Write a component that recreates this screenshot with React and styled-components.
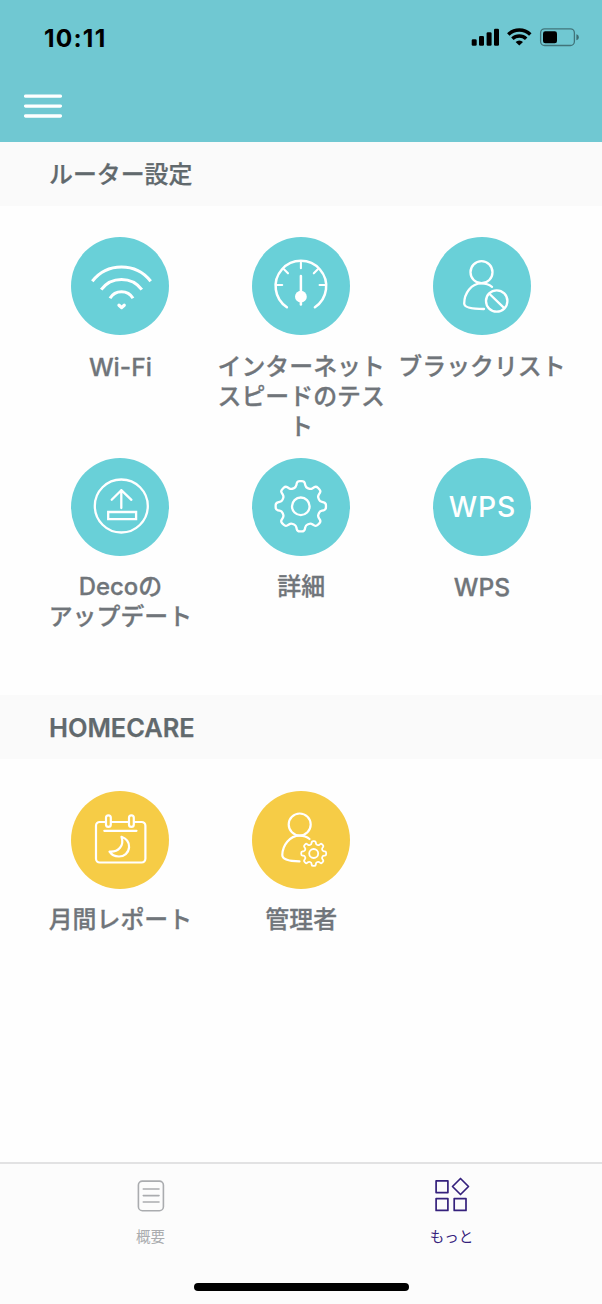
import React from 'react';
import styled, { createGlobalStyle } from 'styled-components';

const GlobalStyle = createGlobalStyle`
  * { box-sizing: border-box; }
  body {
    margin: 0;
    background: #fff;
    font-family: Inter, "Noto Sans CJK JP", sans-serif;
  }
  svg { display: block; }
`;

const Screen = styled.div`
  width: 602px;
  height: 1304px;
  display: flex;
  flex-direction: column;
  background: #fefefe;
  overflow: hidden;
`;

const Header = styled.header`
  flex: none;
  height: 141.5px;
  background: #70c8d2;
`;

const StatusBar = styled.div`
  height: 74px;
  padding: 0 23px 0 44px;
  display: flex;
  align-items: center;
  justify-content: space-between;
`;

const Clock = styled.span`
  padding-top: 2px;
  font-size: 24.5px;
  line-height: 30px;
  font-weight: 700;
  letter-spacing: 1.2px;
  color: #000;
`;

const StatusIcons = styled.div`
  display: flex;
  align-items: center;
`;

const NavBar = styled.div`
  height: 64px;
  padding-left: 24px;
  display: flex;
  align-items: center;
`;

const MenuButton = styled.button`
  border: 0;
  padding: 0;
  background: none;
`;

const SectionTitle = styled.h2`
  flex: none;
  margin: 0;
  height: 64px;
  padding: ${(p) => (p.$latin ? '1px' : '2px')} 49px 0;
  display: flex;
  align-items: center;
  background: #fafafa;
  color: #61696d;
  font-size: ${(p) => (p.$latin ? '25.4px' : '23.9px')};
  line-height: 30px;
  font-weight: ${(p) => (p.$latin ? 600 : 500)};
  -webkit-text-stroke: 0.25px currentColor;
`;

const Grid = styled.div`
  flex: none;
  height: ${(p) => p.$height}px;
  padding: 31.5px 30px 0;
  display: grid;
  grid-template-columns: repeat(3, 180.8px);
  grid-auto-rows: 220.5px;
`;

const Tile = styled.div`
  display: flex;
  flex-direction: column;
  align-items: center;
`;

const Badge = styled.div`
  width: 98px;
  height: 98px;
  border-radius: 50%;
  background: ${(p) => (p.$tone === 'yellow' ? '#f6cc46' : '#69d0d8')};
  display: flex;
  align-items: center;
  justify-content: center;
`;

const BadgeText = styled.span`
  padding-left: 1px;
  color: #fff;
  font-size: 28.3px;
  font-weight: 450;
  letter-spacing: 0.9px;
`;

const Label = styled.div`
  margin-top: 16.5px;
  width: 172px;
  text-align: center;
  white-space: pre-line;
  color: #70757a;
  font-size: ${(p) => (p.$latin ? '24.6px' : '23.9px')};
  line-height: 30px;
  font-weight: 500;
  -webkit-text-stroke: 0.3px currentColor;
`;

const TabBar = styled.nav`
  flex: none;
  margin-top: auto;
  height: 142px;
  border-top: 2px solid #e2e2e3;
  background: #fcfcfc;
  display: flex;
  flex-direction: column;
  align-items: center;
`;

const Tabs = styled.div`
  width: 100%;
  height: 119px;
  display: grid;
  grid-template-columns: 1fr 1fr;
`;

const Tab = styled.div`
  padding-top: 11px;
  display: flex;
  flex-direction: column;
  align-items: center;
  gap: 11px;
  color: ${(p) => (p.$active ? '#35217c' : '#aaacaf')};
  font-size: 14.5px;
  line-height: 22px;
`;

const HomeIndicator = styled.div`
  width: 215px;
  height: 8px;
  border-radius: 4px;
  background: #000;
`;

function gearPath(cx, cy, outer, inner, tip, base) {
  const pts = [];
  for (let i = 0; i < 8; i++) {
    const a = i * 45;
    [[-base, inner], [-tip, outer], [tip, outer], [base, inner]].forEach(([d, r]) => {
      const t = ((a + d - 90) * Math.PI) / 180;
      pts.push([cx + r * Math.cos(t), cy + r * Math.sin(t)]);
    });
  }
  const k = 0.36;
  const n = pts.length;
  const mix = (p, q) => [p[0] + (q[0] - p[0]) * k, p[1] + (q[1] - p[1]) * k];
  const f = (p) => p.map((v) => v.toFixed(2)).join(' ');
  return (
    pts
      .map((p, i) => {
        const before = mix(p, pts[(i + n - 1) % n]);
        const after = mix(p, pts[(i + 1) % n]);
        return `${i ? 'L' : 'M'}${f(before)} Q${f(p)} ${f(after)}`;
      })
      .join(' ') + 'Z'
  );
}

const Glyph = ({ children, weight = 2.5 }) => (
  <svg width="98" height="98" viewBox="0 0 98 98" fill="none" stroke="#fff" strokeWidth={weight} strokeLinecap="round" strokeLinejoin="round">
    {children}
  </svg>
);

const WifiGlyph = () => (
  <Glyph weight={3.1}>
    <g strokeLinecap="butt">
      <path d="M21.3 44.3A37 37 0 0 1 79.7 44.3" />
      <path d="M30.2 52.6A25.5 25.5 0 0 1 70.8 52.6" />
      <path d="M39 61.2A13.4 13.4 0 0 1 62 61.2" />
    </g>
    <path d="M48 68.2L50.6 70.6L53.2 68.2" strokeWidth="3.3" />
  </Glyph>
);

const GaugeGlyph = () => (
  <Glyph>
    <path d="M34.9 70.2A25.3 25.3 0 1 1 62.9 70.2" />
    <path d="M48.9 25.5V31.3M23.8 48H30.2M67.6 48H74M32 32.3L36 36.3M65.8 32.3L61.8 36.3" strokeWidth="2.1" />
    <path d="M48.9 39V67.5" />
    <circle cx="48.9" cy="59.7" r="5.9" fill="#fff" stroke="none" />
  </Glyph>
);

const BlockedUserGlyph = () => (
  <Glyph weight={2.3}>
    <circle cx="48.5" cy="35.2" r="11" />
    <path d="M59 49.8C56 47.5 52.5 46.4 48.5 46.4C38 46.4 31.2 56.5 31.2 66.5C31.2 70.5 39 72 51 72" />
    <circle cx="63.7" cy="64" r="10.7" />
    <path d="M56.6 57L71 70.8" />
  </Glyph>
);

const UpdateGlyph = () => (
  <Glyph weight={2.3}>
    <circle cx="50.3" cy="48" r="26.5" />
    <path d="M50.3 50V32.2M40.7 41.8L50.3 32.2L60.4 41.8" />
    <path d="M37.2 54H65.1V61.2H37.2Z" strokeLinejoin="miter" />
  </Glyph>
);

const SettingsGlyph = () => (
  <Glyph weight={2.3}>
    <path d={gearPath(48.8, 48.3, 25.4, 19.6, 8, 14.5)} />
    <circle cx="48.8" cy="48.3" r="8.8" />
  </Glyph>
);

const CalendarGlyph = () => (
  <Glyph weight={2.2}>
    <path d="M34.5 31H28.7A3.7 3.7 0 0 0 25 34.7V67.8A3.7 3.7 0 0 0 28.7 71.5H70.7A3.7 3.7 0 0 0 74.4 67.8V34.7A3.7 3.7 0 0 0 70.7 31H63.3M57.3 31H40.5" />
    <rect x="35" y="24.4" width="4.8" height="11.4" rx="2.4" />
    <rect x="58" y="24.4" width="4.8" height="11.4" rx="2.4" />
    <path d="M33.3 39.8H65.5" />
    <path d="M50.5 45.8C56 47.8 58.3 51.3 58.1 56.2C57.7 62 53 65.6 47.8 65.5C43.5 65.4 40.5 63.7 38.5 60.6C47.5 61.3 53.5 54.5 50.5 45.8Z" />
  </Glyph>
);

const AdminGlyph = () => (
  <Glyph weight={2.2}>
    <circle cx="47.7" cy="33.5" r="11" />
    <path d="M57.5 48C54.8 45.7 51.5 44.7 47.7 44.7C37.5 44.7 30.5 54.5 30.3 64C30.3 68.5 38 70.2 47.5 70.4" />
    <path d={gearPath(61.7, 62.5, 12.6, 9.4, 8.5, 14.5)} strokeWidth="1.8" />
    <circle cx="61.7" cy="62.5" r="4.5" strokeWidth="1.8" />
  </Glyph>
);

const StatusGlyphs = () => (
  <svg width="108" height="20" viewBox="471 27 108 20" fill="#000">
    <rect x="471.7" y="39.3" width="5" height="6.5" rx="1.3" />
    <rect x="479" y="36" width="5" height="9.8" rx="1.3" />
    <rect x="486.6" y="32.3" width="5" height="13.5" rx="1.3" />
    <rect x="494" y="28.7" width="5" height="17.1" rx="1.3" />
    <g fill="none" stroke="#000" strokeWidth="3.5">
      <path d="M508.3 34.6A15.7 15.7 0 0 1 530.3 34.6" />
      <path d="M512.4 38.8A9.9 9.9 0 0 1 526.2 38.8" />
    </g>
    <path d="M515.6 42A5.3 5.3 0 0 1 523 42L519.3 45.6Z" />
    <rect x="540.6" y="28.9" width="33.8" height="16.6" rx="4" fill="none" stroke="#000" strokeOpacity=".42" strokeWidth="1.3" />
    <rect x="543" y="31.2" width="14" height="12" rx="2.3" />
    <path d="M576.4 34.2C578 34.6 578.8 35.6 578.8 37.2C578.8 38.8 578 39.8 576.4 40.2Z" opacity=".45" />
  </svg>
);

const MenuGlyph = () => (
  <svg width="38" height="24" viewBox="0 0 38 24" stroke="#fff" strokeWidth="3.3" strokeLinecap="round">
    <path d="M1.6 2.2H36.4M1.6 12.1H36.4M1.6 22H36.4" />
  </svg>
);

const OverviewGlyph = () => (
  <svg width="40" height="40" viewBox="0 0 40 40" fill="none" stroke="#aaacaf" strokeWidth="1.6" strokeLinecap="round">
    <rect x="7.4" y="6.1" width="25" height="29.6" rx="4" />
    <path d="M12.3 14H28M12.3 20.6H28M12.3 27H28" />
  </svg>
);

const MoreGlyph = () => (
  <svg width="40" height="40" viewBox="0 0 40 40" fill="none" stroke="#35217c" strokeWidth="1.7" strokeLinejoin="round">
    <rect x="4.1" y="5.8" width="11.8" height="11.8" />
    <rect x="4.1" y="23.6" width="11.8" height="11.8" />
    <rect x="22.2" y="23.6" width="11.8" height="11.8" />
    <path d="M28.5 3.5L36.5 11.5L28.5 19.5L20.5 11.5Z" />
  </svg>
);

const routerItems = [
  { label: 'Wi-Fi', latin: true, icon: <WifiGlyph /> },
  { label: 'インターネット\nスピードのテス\nト', icon: <GaugeGlyph /> },
  { label: 'ブラックリスト', icon: <BlockedUserGlyph /> },
  { label: 'Decoの\nアップデート', icon: <UpdateGlyph /> },
  { label: '詳細', icon: <SettingsGlyph /> },
  { label: 'WPS', latin: true, icon: <BadgeText>WPS</BadgeText> },
];

const homeCareItems = [
  { label: '月間レポート', icon: <CalendarGlyph /> },
  { label: '管理者', icon: <AdminGlyph /> },
];

const TileGrid = ({ items, tone, height }) => (
  <Grid $height={height}>
    {items.map((item) => (
      <Tile key={item.label}>
        <Badge $tone={tone}>{item.icon}</Badge>
        <Label $latin={item.latin}>{item.label}</Label>
      </Tile>
    ))}
  </Grid>
);

export default function App() {
  return (
    <>
      <GlobalStyle />
      <Screen>
        <Header>
          <StatusBar>
            <Clock>10:11</Clock>
            <StatusIcons>
              <StatusGlyphs />
            </StatusIcons>
          </StatusBar>
          <NavBar>
            <MenuButton aria-label="メニュー">
              <MenuGlyph />
            </MenuButton>
          </NavBar>
        </Header>
        <SectionTitle>ルーター設定</SectionTitle>
        <TileGrid items={routerItems} tone="teal" height={489.5} />
        <SectionTitle $latin>HOMECARE</SectionTitle>
        <TileGrid items={homeCareItems} tone="yellow" height={260} />
        <TabBar>
          <Tabs>
            <Tab>
              <OverviewGlyph />
              <span>概要</span>
            </Tab>
            <Tab $active>
              <MoreGlyph />
              <span>もっと</span>
            </Tab>
          </Tabs>
          <HomeIndicator />
        </TabBar>
      </Screen>
    </>
  );
}
